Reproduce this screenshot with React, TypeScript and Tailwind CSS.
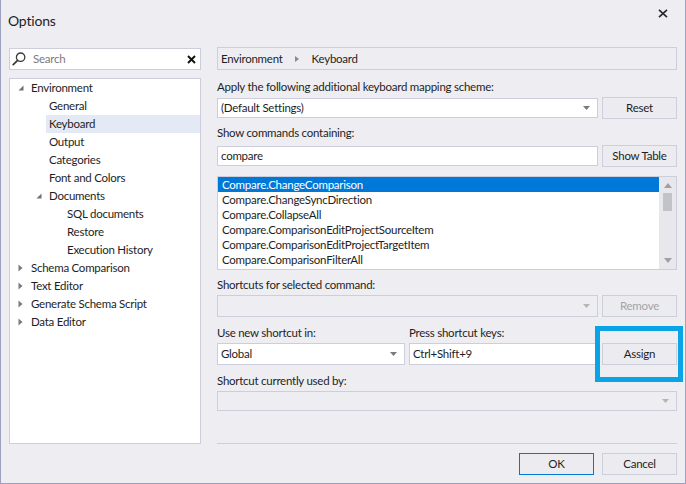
import React from "react";

const Down = () => (
  <svg width="6" height="6" viewBox="0 0 6 6">
    <path d="M5.5 0.5 L5.5 5.5 L0.5 5.5 Z" fill="#717171" />
  </svg>
);
const Right = ({ color = "#7a7a7a" }: { color?: string }) => (
  <svg width="5" height="8" viewBox="0 0 5 8">
    <path d="M0.5 0.5 L4.5 4 L0.5 7.5 Z" fill={color} />
  </svg>
);
const Caret = ({ color = "#7a7a7a" }: { color?: string }) => (
  <svg width="7" height="4" viewBox="0 0 7 4">
    <path d="M0 0 H7 L3.5 4 Z" fill={color} />
  </svg>
);

type Node = { l: number; t: string; exp?: boolean; col?: boolean; sel?: boolean };
const tree: Node[] = [
  { l: 0, t: "Environment", exp: true },
  { l: 1, t: "General" },
  { l: 1, t: "Keyboard", sel: true },
  { l: 1, t: "Output" },
  { l: 1, t: "Categories" },
  { l: 1, t: "Font and Colors" },
  { l: 1, t: "Documents", exp: true },
  { l: 2, t: "SQL documents" },
  { l: 2, t: "Restore" },
  { l: 2, t: "Execution History" },
  { l: 0, t: "Schema Comparison", col: true },
  { l: 0, t: "Text Editor", col: true },
  { l: 0, t: "Generate Schema Script", col: true },
  { l: 0, t: "Data Editor", col: true },
];

const cmds = [
  "Compare.ChangeComparison",
  "Compare.ChangeSyncDirection",
  "Compare.CollapseAll",
  "Compare.ComparisonEditProjectSourceItem",
  "Compare.ComparisonEditProjectTargetItem",
  "Compare.ComparisonFilterAll",
];

const TreeRow = ({ n }: { n: Node }) => {
  const indent = n.l === 0 ? "w-[8px]" : n.l === 1 ? "w-[26px]" : "w-[44px]";
  const leafIndent = n.l === 0 ? "w-[18px]" : n.l === 1 ? "w-[36px]" : "w-[54px]";
  if (n.exp || n.col) {
    return (
      <div className="h-[18px] flex items-center">
        <div className={indent + " shrink-0"} />
        <div className="w-[13px] shrink-0 flex items-center">
          {n.exp ? <Down /> : <Right />}
        </div>
        <span>{n.t}</span>
      </div>
    );
  }
  return (
    <div className="h-[18px] flex items-center">
      <div className={leafIndent + " shrink-0"} />
      <div className={"flex-1 h-full flex items-center pl-[3px] " + (n.sel ? "bg-[#e3eaf6]" : "")}>
        {n.t}
      </div>
    </div>
  );
};

const Btn = ({ children, disabled, primary }: { children: React.ReactNode; disabled?: boolean; primary?: boolean }) => (
  <div
    className={
      "w-[75px] h-[22px] shrink-0 flex items-center justify-center border bg-[#ececf0] " +
      (primary ? "border-[#0078d7] " : "border-[#cccedb] ") +
      (disabled ? "text-[#a2a4a5]" : "text-[#1e1e1e]")
    }
  >
    {children}
  </div>
);

const Label = ({ children, cls = "" }: { children: React.ReactNode; cls?: string }) => (
  <div className={"h-[16px] leading-[16px] " + cls}>{children}</div>
);

export default function App() {
  return (
    <div className="relative w-[686px] h-[484px] bg-[#eeeef2] border-l border-r border-b border-[#9da1bd] text-[#1e1e1e] text-[11.5px] tracking-[-0.25px] font-['Lato',sans-serif] overflow-hidden">
      {/* title bar */}
      <div className="h-[47px] flex justify-between items-start pl-[7px] pr-[17px]">
        <div className="pt-[10px] leading-[22px] text-[14px] tracking-[-0.2px]">Options</div>
        <div className="mt-[9px]">
          <svg width="10" height="9" viewBox="0 0 10 9">
            <path d="M1 0.8 L9 8.2 M9 0.8 L1 8.2" stroke="#2a2a2a" strokeWidth="1.7" />
          </svg>
        </div>
      </div>

      <div className="flex pl-[8px] gap-[16px]">
        {/* left column */}
        <div className="w-[192px] shrink-0 flex flex-col">
          <div className="mt-[1px] h-[22px] border border-[#cccedb] bg-white flex items-center">
            <div className="ml-[2px] w-[14px] h-[14px]">
              <svg width="14" height="14" viewBox="0 0 14 14">
                <circle cx="8.6" cy="5.2" r="4.2" fill="none" stroke="#3a3a3a" strokeWidth="1.3" />
                <path d="M5.6 8.3 L1.2 12.7" stroke="#3a3a3a" strokeWidth="1.7" strokeLinecap="round" />
              </svg>
            </div>
            <span className="ml-[7px] text-[#7a7a7a] flex-1">Search</span>
            <div className="mr-[4px]">
              <svg width="9" height="9" viewBox="0 0 9 9">
                <path d="M1 1 L8 8 M8 1 L1 8" stroke="#111" strokeWidth="1.9" />
              </svg>
            </div>
          </div>
          <div className="mt-[8px] h-[366px] border border-[#cccedb] bg-white">
            {tree.map((n, i) => (
              <TreeRow key={i} n={n} />
            ))}
          </div>
        </div>

        {/* right column */}
        <div className="w-[460px] shrink-0 flex flex-col">
          <div className="h-[23px] border border-[#cccedb] flex items-center pl-[3px]">
            <span>Environment</span>
            <span className="ml-[12px] mr-[13px] flex items-center">
              <svg width="4" height="6" viewBox="0 0 4 6">
                <path d="M0 0 L4 3 L0 6 Z" fill="#8a8a8a" />
              </svg>
            </span>
            <span>Keyboard</span>
          </div>

          <Label cls="mt-[9px]">Apply the following additional keyboard mapping scheme:</Label>
          <div className="mt-[2px] flex items-center gap-[4px]">
            <div className="flex-1 h-[20px] border border-[#cccedb] bg-white flex items-center pl-[3px] pr-[7px]">
              <span className="flex-1">(Default Settings)</span>
              <Caret />
            </div>
            <Btn>Reset</Btn>
          </div>

          <Label cls="mt-[6px]">Show commands containing:</Label>
          <div className="mt-[4px] flex items-center gap-[4px]">
            <div className="flex-1 h-[20px] border border-[#cccedb] bg-white flex items-center pl-[3px]">
              compare
            </div>
            <Btn>Show Table</Btn>
          </div>

          <div className="mt-[9px] h-[94px] border border-[#cccedb] bg-white flex">
            <div className="flex-1 flex flex-col">
              {cmds.map((c, i) => (
                <div
                  key={i}
                  className={
                    "h-[15px] leading-[15px] pl-[4px] " + (i === 0 ? "bg-[#0078d7] text-white" : "")
                  }
                >
                  {c}
                </div>
              ))}
            </div>
            <div className="w-[17px] bg-[#e8e8ec] flex flex-col items-center">
              <div className="mt-[6px]">
                <svg width="8" height="5" viewBox="0 0 8 5">
                  <path d="M0 5 L4 0 L8 5 Z" fill="#a0a0a4" />
                </svg>
              </div>
              <div className="mt-[5px] w-[9px] h-[18px] bg-[#c2c3c9]" />
              <div className="flex-1" />
              <div className="mb-[6px]">
                <svg width="8" height="5" viewBox="0 0 8 5">
                  <path d="M0 0 L8 0 L4 5 Z" fill="#a0a0a4" />
                </svg>
              </div>
            </div>
          </div>

          <Label cls="mt-[7px]">Shortcuts for selected command:</Label>
          <div className="mt-[2px] flex items-center gap-[4px]">
            <div className="flex-1 h-[22px] border border-[#cccedb] flex items-center justify-end pr-[7px]">
              <Caret color="#b5b5b8" />
            </div>
            <Btn disabled>Remove</Btn>
          </div>

          <div className="mt-[8px] flex gap-[4px]">
            <div className="w-[188px] shrink-0 flex flex-col">
              <Label>Use new shortcut in:</Label>
              <div className="mt-[2px] h-[22px] border border-[#cccedb] bg-white flex items-center pl-[3px] pr-[7px]">
                <span className="flex-1">Global</span>
                <Caret />
              </div>
            </div>
            <div className="flex-1 flex flex-col">
              <Label>Press shortcut keys:</Label>
              <div className="mt-[2px] flex items-center gap-[4px]">
                <div className="flex-1 h-[22px] border border-[#cccedb] bg-white flex items-center pl-[3px]">
                  Ctrl+Shift+9
                </div>
                <Btn>Assign</Btn>
              </div>
            </div>
          </div>

          <Label cls="mt-[8px]">Shortcut currently used by:</Label>
          <div className="mt-[2px] h-[20px] border border-[#cccedb] flex items-center justify-end pr-[7px]">
            <Caret color="#b5b5b8" />
          </div>

          <div className="mt-[32px] h-[1px] bg-[#cccedb]" />

          <div className="mt-[9px] flex justify-end gap-[8px]">
            <Btn primary>OK</Btn>
            <Btn>Cancel</Btn>
          </div>
        </div>
      </div>

      {/* highlight frame */}
      <div className="absolute left-[594px] top-[326px] w-[88px] h-[56px] border-[5px] border-[#0aa3e6]" />
    </div>
  );
}
